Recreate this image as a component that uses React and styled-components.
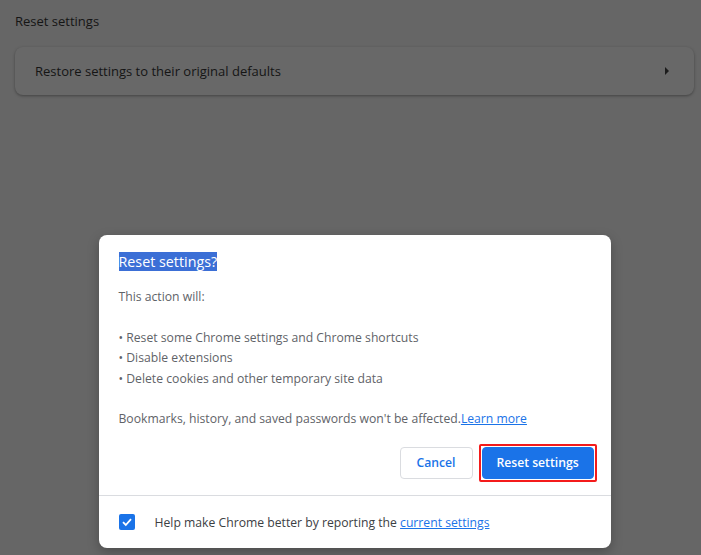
import React from 'react';
import styled, { createGlobalStyle } from 'styled-components';

const Global = createGlobalStyle`
	html, body {
		margin: 0;
		padding: 0;
		background: #666666;
	}
	body {
		font-family: "Open Sans", "Noto Sans", sans-serif;
	}
`

const Page = styled.div`
	width: 701px;
	height: 555px;
	overflow: hidden;
	position: relative;
	background: #666666;
	padding: 12px 7px 0 15px;
	box-sizing: border-box;
`
const SectionTitle = styled.div`
	font-size: 13px;
	color: #151515;
	line-height: 18px;
	height: 18px;
`
const Card = styled.div`
	margin-top: 17px;
	height: 48px;
	border-radius: 8px;
	background: #686868;
	box-shadow: 0 1px 3px rgba(0,0,0,0.35);
	display: flex;
	align-items: center;
	padding: 0 24px 0 20px;
	font-size: 13px;
	color: #151515;
	justify-content: space-between;
`
const Overlay = styled.div`
	position: absolute;
	inset: 0;
	display: flex;
	justify-content: center;
	padding: 235px 0 0 8px;
	box-sizing: border-box;
`
const Dialog = styled.div`
	width: 512px;
	height: 313px;
	background: #fff;
	border-radius: 8px;
	display: flex;
	flex-direction: column;
	box-shadow: 0 4px 12px rgba(0,0,0,0.25);
`
const Body = styled.div`
	padding: 17px 14px 0 20px;
	flex: 1;
`
const Title = styled.h2`
	margin: 0;
	font-size: 14.3px;
	font-weight: 400;
	line-height: 20px;
	color: #fff;
	span {
		background: #3b6fd6;
	}
`
const Text = styled.div`
	margin-top: 15px;
	font-size: 12.2px;
	line-height: 20.5px;
	color: #5f6368;
`
const Blank = styled.div`
	height: 20px;
`
const Link = styled.a`
	color: #1a73e8;
	text-decoration: underline;
	cursor: pointer;
`
const Actions = styled.div`
	display: flex;
	justify-content: flex-end;
	align-items: center;
	gap: 6px;
	margin-top: 14px;
`
const Highlight = styled.div`
	border: 2px solid #f41b1b;
	border-radius: 2px;
	padding: 1px;
	display: flex;
`
const Button = styled.button`
	height: 32px;
	width: ${p => p.$primary ? '112px' : '73px'};
	padding: 0;
	border-radius: 4px;
	font-family: inherit;
	font-size: 12.2px;
	font-weight: 600;
	border: 1px solid ${p => p.$primary ? '#1a73e8' : '#dadce0'};
	background: ${p => p.$primary ? '#1a73e8' : '#fff'};
	color: ${p => p.$primary ? '#fff' : '#1a73e8'};
`
const Footer = styled.div`
	border-top: 1px solid #dadce0;
	height: 52px;
	display: flex;
	align-items: center;
	padding: 0 20px;
	gap: 20px;
	font-size: 12.2px;
	color: #3c4043;
`
const Check = styled.div`
	width: 16px;
	height: 16px;
	border-radius: 2px;
	background: #1a73e8;
	display: flex;
	align-items: center;
	justify-content: center;
`

export default function App() {
	return (
		<Page>
			<Global />
			<SectionTitle>Reset settings</SectionTitle>
			<Card>
				<span>Restore settings to their original defaults</span>
				<svg width="6" height="10" viewBox="0 0 6 10">
					<path d="M1 1 L5 5 L1 9 Z" fill="#1c1c1c" />
				</svg>
			</Card>
			<Overlay>
				<Dialog>
					<Body>
						<Title><span>Reset settings?</span></Title>
						<Text>
							<div>This action will:</div>
							<Blank />
							<div>• Reset some Chrome settings and Chrome shortcuts</div>
							<div>• Disable extensions</div>
							<div>• Delete cookies and other temporary site data</div>
							<Blank />
							<div>Bookmarks, history, and saved passwords won't be affected.<Link>Learn more</Link></div>
						</Text>
						<Actions>
							<Button>Cancel</Button>
							<Highlight>
								<Button $primary>Reset settings</Button>
							</Highlight>
						</Actions>
					</Body>
					<Footer>
						<Check>
							<svg width="12" height="12" viewBox="0 0 12 12">
								<path d="M2 6.2 L4.8 9 L10 3.2" fill="none" stroke="#fff" strokeWidth="1.8" />
							</svg>
						</Check>
						<span>Help make Chrome better by reporting the <Link>current settings</Link></span>
					</Footer>
				</Dialog>
			</Overlay>
		</Page>
	);
}
